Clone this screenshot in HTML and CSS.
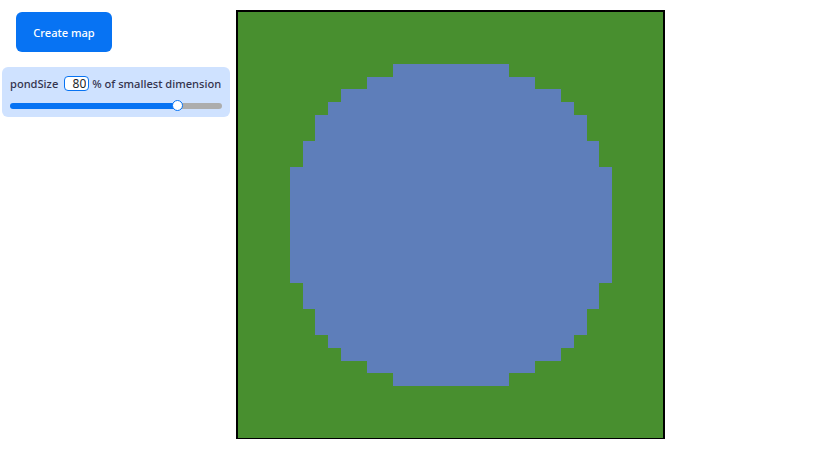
FILE: index.html
```html
<!doctype html>
<html lang="en">
<head>
    <meta charset="UTF-8">
    <title>Pond map</title>
    <link rel="stylesheet" href="styles.css">
</head>
<body>
<div class="page">
    <div class="controls">
        <button class="create-btn" type="button">Create map</button>
        <div class="param">
            <div class="param-label">
                <span>pondSize</span>
                <input class="param-number" type="text" value="80">
                <span>% of smallest dimension</span>
            </div>
            <input class="param-range" type="range" min="0" max="100" value="80">
        </div>
    </div>
    <div class="map">
        <svg class="map-svg" width="426" height="426" viewBox="238 12 426 426" shape-rendering="crispEdges">
            <rect class="land" x="238" y="12" width="426" height="426"/>
            <polygon class="pond" points="393,64 509,64 509,77 535,77 535,89 561,89 561,102 574,102 574,115 587,115 587,141 599,141 599,167 612,167 612,283 599,283 599,309 587,309 587,335 574,335 574,348 561,348 561,361 535,361 535,373 509,373 509,386 393,386 393,373 367,373 367,361 341,361 341,348 328,348 328,335 315,335 315,309 303,309 303,283 290,283 290,167 303,167 303,141 315,141 315,115 328,115 328,102 341,102 341,89 367,89 367,77 393,77"/>
        </svg>
    </div>
</div>
</body>
</html>
```

FILE: styles.css
```css
* {
    box-sizing: border-box;
    padding: 0;
    margin: 0;
}

body {
    background: #fff;
    font-family: "Noto Sans", sans-serif;
}

.page {
    display: flex;
    align-items: flex-start;
    padding-top: 10px;
}

.controls {
    width: 236px;
    padding: 2px 6px 0 2px;
}

.create-btn {
    display: block;
    width: 96px;
    height: 40px;
    margin-left: 14px;
    background: #0773f3;
    border: 0;
    border-radius: 6px;
    color: #fff;
    font-family: inherit;
    font-size: 11.1px;
    font-weight: 500;
}

.param {
    width: 228px;
    height: 50px;
    margin-top: 15px;
    padding: 9px 8px 0;
    background: #cfe2ff;
    border-radius: 6px;
    color: #33334d;
    font-size: 11.1px;
    font-weight: 500;
}

.param-label {
    display: flex;
    align-items: center;
    height: 15px;
    white-space: nowrap;
}

.param-number {
    width: 25px;
    height: 15px;
    margin: 0 3px 0 6px;
    padding-right: 2px;
    background: #fff;
    border: 1px solid #0773f3;
    border-radius: 4px;
    color: #212529;
    font-family: inherit;
    font-size: 12px;
    text-align: right;
}

.param-range {
    display: block;
    width: 212px;
    height: 11px;
    margin-top: 9px;
    appearance: none;
    -webkit-appearance: none;
    background: transparent;
}

.param-range::-webkit-slider-runnable-track {
    height: 6px;
    background: linear-gradient(to right, #0773f3 0 79%, #adadad 79% 100%);
    border-radius: 3px;
}

.param-range::-webkit-slider-thumb {
    -webkit-appearance: none;
    width: 11px;
    height: 11px;
    margin-top: -2.5px;
    background: #fff;
    border: 1.5px solid #0773f3;
    border-radius: 50%;
    transform: translateX(1px);
}

.map {
    width: 429px;
    height: 429px;
    border: 2px solid #000;
    border-bottom-width: 1px;
    overflow: hidden;
}

.map-svg {
    display: block;
}

.land {
    fill: #488f2f;
}

.pond {
    fill: #5e7eba;
}
```
